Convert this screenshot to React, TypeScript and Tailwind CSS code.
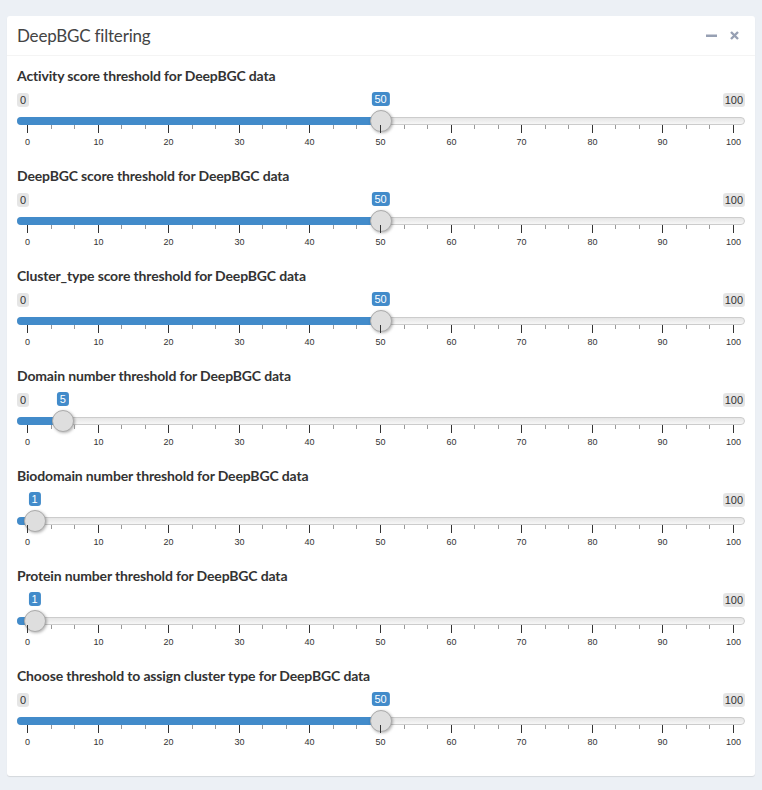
import React from "react";

const SCALE_LEFT = 10;
const SCALE_WIDTH = 706;

const sliders = [
  { label: "Activity score threshold for DeepBGC data", value: 50 },
  { label: "DeepBGC score threshold for DeepBGC data", value: 50 },
  { label: "Cluster_type score threshold for DeepBGC data", value: 50 },
  { label: "Domain number threshold for DeepBGC data", value: 5 },
  { label: "Biodomain number threshold for DeepBGC data", value: 1 },
  { label: "Protein number threshold for DeepBGC data", value: 1 },
  { label: "Choose threshold to assign cluster type for DeepBGC data", value: 50 },
];

function pos(v: number) {
  return SCALE_LEFT + (v / 100) * SCALE_WIDTH;
}

// tick marks + numbers under the track
function Grid() {
  const ticks: { x: number; major: boolean; v: number }[] = [];
  for (let i = 0; i <= 30; i++) {
    const v = (i * 10) / 3;
    ticks.push({ x: pos(v), major: i % 3 === 0, v: Math.round(v) });
  }
  return (
    <div className="relative h-[26px]">
      {ticks.map((t, i) => (
        <div
          key={i}
          className={
            t.major
              ? "absolute top-0 h-[8px] w-px bg-[#333]"
              : "absolute top-0 h-[4px] w-px bg-[#999]"
          }
          style={{ left: Math.round(t.x) }}
        />
      ))}
      {ticks
        .filter((t) => t.major)
        .map((t) => (
          <div
            key={"l" + t.v}
            className="absolute top-[11px] w-[30px] -translate-x-1/2 text-center text-[9px] leading-[12px] text-[#333]"
            style={{ left: Math.round(t.x) + 0.5 }}
          >
            {t.v}
          </div>
        ))}
    </div>
  );
}

function RangeSlider({ label, value }: { label: string; value: number }) {
  const x = pos(value);
  const singleW = value >= 10 ? 18 : 12;
  const hideMin = x - singleW / 2 < 14;
  return (
    <div className="mb-[15px] flex flex-col">
      <div className="mb-[5px] text-[14px] font-bold leading-[20px] tracking-[-0.15px] text-[#333]">{label}</div>
      <div className="flex flex-col font-['Liberation_Sans',Arial,sans-serif]">
        {/* min / value / max labels */}
        <div className="relative flex h-[26px] items-start justify-between pt-[2px]">
          <span
            className={
              hideMin
                ? "invisible rounded-[3px] bg-black/10 px-[3px] text-[11px] leading-[14px] text-[#333]"
                : "rounded-[3px] bg-black/10 px-[3px] text-[11px] leading-[14px] text-[#333]"
            }
          >
            0
          </span>
          <span className="rounded-[3px] bg-black/10 px-[2px] text-[11px] leading-[14px] text-[#333]">100</span>
          <span
            className="absolute top-px -translate-x-1/2 rounded-[3px] bg-[#428bca] px-[3px] text-[11px] leading-[14px] text-white"
            style={{ left: x + 0.5 }}
          >
            {value}
          </span>
        </div>
        {/* track */}
        <div className="relative h-[8px] rounded-full border border-[#cccccc] bg-[linear-gradient(to_bottom,#dddddd_-50%,#ffffff_150%)]">
          <div className="-m-px h-[8px] rounded-l-full bg-[#428bca]" style={{ width: x }} />
          <div
            className="absolute top-[-8px] h-[22px] w-[22px] -translate-x-1/2 rounded-full border border-[#ababab] bg-[#dedede] shadow-[1px_1px_3px_rgba(0,0,0,0.3)]"
            style={{ left: x - 0.5 }}
          />
        </div>
        <Grid />
      </div>
    </div>
  );
}

export default function App() {
  return (
    <div className="min-h-[790px] bg-[#ecf0f5] px-[7px] pt-[16px] font-['Lato','Open_Sans',sans-serif]">
      <div className="rounded-[3px] bg-white shadow-[0_1px_1px_rgba(0,0,0,0.1)]">
        {/* Header */}
        <div className="flex h-[40px] items-center justify-between border-b border-[#f4f4f4] px-[10px]">
          <h3 className="text-[17px] leading-none tracking-[-0.2px] text-[#444]">DeepBGC filtering</h3>
          <div className="flex items-center gap-[13px] pr-[6px] text-[#97a0b3]">
            <svg width="11" height="10" viewBox="0 0 11 10">
              <rect x="0" y="3.5" width="11" height="2.5" fill="currentColor" />
            </svg>
            <svg width="9" height="9" viewBox="0 0 9 9">
              <path d="M1 1L8 8M8 1L1 8" stroke="currentColor" strokeWidth="2.4" />
            </svg>
          </div>
        </div>
        {/* Body */}
        <div className="flex flex-col px-[10px] pb-[10px] pt-[10px]">
          {sliders.map((s) => (
            <RangeSlider key={s.label} label={s.label} value={s.value} />
          ))}
        </div>
      </div>
    </div>
  );
}
